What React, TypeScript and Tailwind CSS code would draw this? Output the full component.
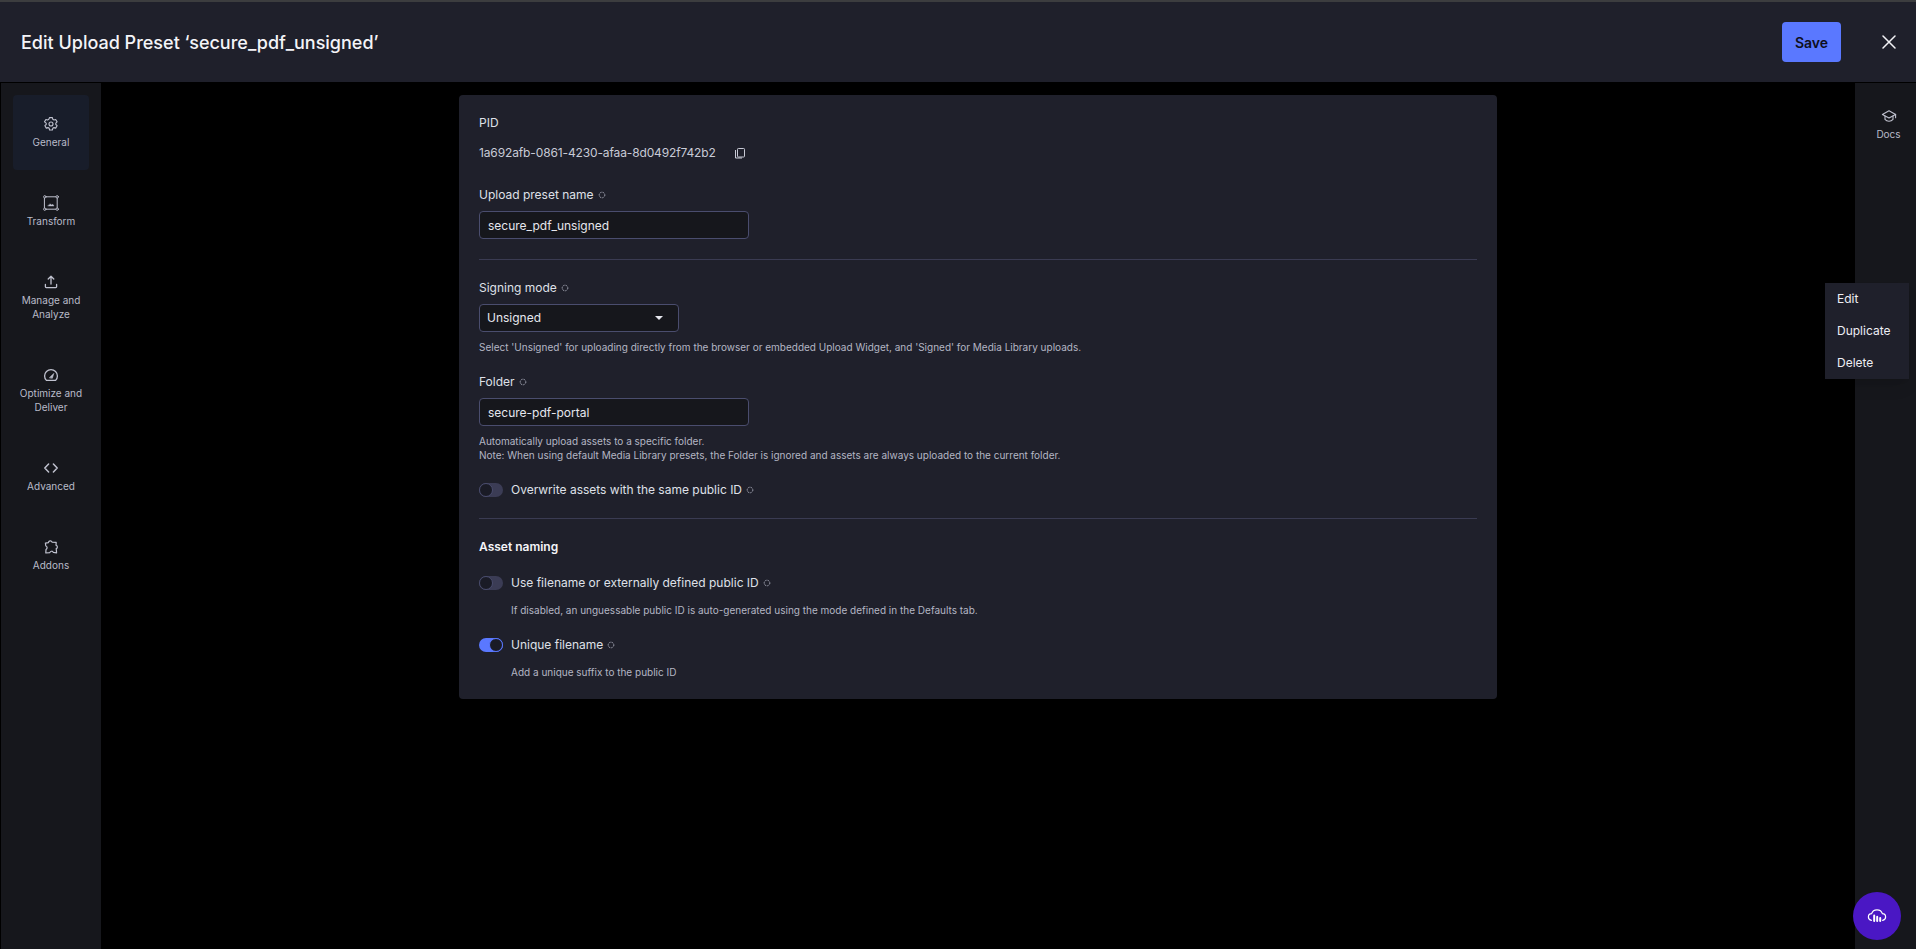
import { ReactNode } from "react";

const font = { fontFamily: "Inter, 'Noto Sans', sans-serif" };

function InfoDot() {
  return (
    <svg className="ml-[4px] inline-block h-[8px] w-[8px] shrink-0" viewBox="0 0 8 8" fill="none">
      <circle cx="4" cy="4" r="2.8" stroke="#b8bac8" strokeWidth="1" strokeDasharray="1 0.76" />
    </svg>
  );
}

const iconProps = {
  viewBox: "0 0 16 16",
  fill: "none",
  stroke: "#c0c2cf",
  strokeWidth: 1.1,
  strokeLinecap: "round" as const,
  strokeLinejoin: "round" as const,
  className: "h-4 w-4",
};

function GearIcon() {
  return (
    <svg {...iconProps}>
      <path d="M6.6 1.6h2.8l.4 1.7 1.2.7 1.7-.5 1.4 2.4-1.3 1.2v1.4l1.3 1.2-1.4 2.4-1.7-.5-1.2.7-.4 1.7H6.6l-.4-1.7-1.2-.7-1.7.5-1.4-2.4 1.3-1.2V7.1L1.5 5.9l1.4-2.4 1.7.5 1.2-.7z" />
      <circle cx="8" cy="8" r="2" />
    </svg>
  );
}

function TransformIcon() {
  return (
    <svg {...iconProps}>
      <rect x="1.8" y="1.8" width="12.4" height="12.4" strokeWidth="1" />
      <circle cx="1.8" cy="1.8" r="1.2" fill="#16171c" strokeWidth="0.9" />
      <circle cx="14.2" cy="1.8" r="1.2" fill="#16171c" strokeWidth="0.9" />
      <circle cx="1.8" cy="14.2" r="1.2" fill="#16171c" strokeWidth="0.9" />
      <circle cx="14.2" cy="14.2" r="1.2" fill="#16171c" strokeWidth="0.9" />
      <path d="M5 11h6L9.8 9.2 8.9 10.1 7.1 9z" fill="#c0c2cf" strokeWidth="0.4" />
    </svg>
  );
}

function UploadIcon() {
  return (
    <svg {...iconProps}>
      <path d="M8 10V2.4M5.2 5 8 2.2 10.8 5" strokeWidth="1.3" />
      <path d="M2.4 10.4v2.4c0 .5.3.8.8.8h9.6c.5 0 .8-.3.8-.8v-2.4" strokeWidth="1.3" />
    </svg>
  );
}

function GaugeIcon() {
  return (
    <svg {...iconProps}>
      <path d="M3.4 13.4h9.2c1.1-1.1 1.8-2.7 1.8-4.4A6.4 6.4 0 0 0 8 2.6 6.4 6.4 0 0 0 1.6 9c0 1.7.7 3.3 1.8 4.4z" strokeWidth="1.3" />
      <path d="M6.6 10.6 10.8 6.4 9.4 11z" fill="#c0c2cf" strokeWidth="0.6" />
    </svg>
  );
}

function CodeIcon() {
  return (
    <svg {...iconProps} strokeWidth={1.5}>
      <path d="M5.6 4 1.8 8l3.8 4M10.4 4l3.8 4-3.8 4" />
    </svg>
  );
}

function PuzzleIcon() {
  return (
    <svg {...iconProps} strokeWidth={1.2}>
      <path d="M2.4 4.2 5.4 3.6C5.6 1.8 8.2 1 9.2 3.2L13.2 3.4 13 6.2C14.8 6.8 14.8 9 13.2 9.6L13.6 13.8 10.4 13.4C9.6 11.8 7.6 11.8 6.8 13.6L2.8 14 3 10.4C4.6 9.4 4.4 7.4 2.8 7z" />
    </svg>
  );
}

function CapIcon() {
  return (
    <svg {...iconProps}>
      <path d="M1.4 6.4 8 2.8l6.6 3.6L8 10z" />
      <path d="M4 8v3.4c1 1.2 2.5 1.8 4 1.8s3-.6 4-1.8V8" />
      <path d="M14.6 6.4v3.4" />
    </svg>
  );
}

function NavItem({ icon, label, active }: { icon: ReactNode; label: ReactNode; active?: boolean }) {
  return (
    <div
      className={`flex flex-col items-center rounded-[4px] py-[21px] text-center text-[10px] leading-[14px] text-[#b9bbc9] ${
        active ? "bg-[#181d2a]" : ""
      }`}
    >
      <div className="mb-[3px]">{icon}</div>
      <div>{label}</div>
    </div>
  );
}

function Label({ children }: { children: ReactNode }) {
  return <div className="flex items-center text-[12px] leading-[18px] text-[#dfe0e8]">{children}</div>;
}

function Toggle({ on }: { on?: boolean }) {
  return (
    <div
      className={`flex h-[14px] w-[24px] items-center rounded-full ${
        on ? "justify-end bg-[#5a78ff]" : "justify-start bg-[#3b3c55]"
      }`}
    >
      <div className={`h-[14px] w-[14px] rounded-full border bg-[#1a1b26] ${on ? "border-[#5a78ff]" : "border-[#4a4d6e]"}`} />
    </div>
  );
}

function ToggleRow({ on, children }: { on?: boolean; children: ReactNode }) {
  return (
    <div className="flex h-[18px] items-center gap-[8px] text-[12px] text-[#dfe0e8]">
      <Toggle on={on} />
      <span>{children}</span>
      <span className="-ml-[8px] flex">
        <InfoDot />
      </span>
    </div>
  );
}

function Hint({ children, className = "" }: { children: ReactNode; className?: string }) {
  return <div className={`text-[10px] leading-[14px] text-[#b4b6c4] ${className}`}>{children}</div>;
}

function TextBox({ value }: { value: string }) {
  return (
    <div className="mt-[7px] flex h-[28px] w-[270px] items-center rounded-[4px] border border-[#4a4d6e] bg-[#16171c] px-[8px] pt-[2px] text-[12px] text-[#e6e7ee]">
      {value}
    </div>
  );
}

export default function App() {
  return (
    <div style={font} className="relative flex h-screen flex-col overflow-hidden bg-black">
      <div className="h-[2px] bg-[#3c3d3f]" />
      <header className="flex h-[80px] items-center justify-between bg-[#1f202b] pl-[21px] pr-[20px]">
        <h1 className="text-[18px] font-medium text-[#f4f4f8]">Edit Upload Preset ‘secure_pdf_unsigned’</h1>
        <div className="flex items-center gap-[41px]">
          <button className="h-[40px] w-[59px] rounded-[4px] bg-[#5a78ff] text-[14px] font-semibold text-[#0e0f1c]">
            Save
          </button>
          <svg className="h-[14px] w-[14px]" viewBox="0 0 14 14" fill="none" stroke="#f2f2f6" strokeWidth="1.5" strokeLinecap="round">
            <path d="M1 1l12 12M13 1 1 13" />
          </svg>
        </div>
      </header>
      <div className="mt-[1px] flex min-h-0 flex-1 pl-[1px]">
        <aside className="flex w-[100px] shrink-0 flex-col gap-[4px] bg-[#16171c] px-[12px] pt-[12px]">
          <NavItem active icon={<GearIcon />} label="General" />
          <NavItem icon={<TransformIcon />} label="Transform" />
          <NavItem icon={<UploadIcon />} label={<>Manage and<br />Analyze</>} />
          <NavItem icon={<GaugeIcon />} label={<>Optimize and<br />Deliver</>} />
          <NavItem icon={<CodeIcon />} label="Advanced" />
          <NavItem icon={<PuzzleIcon />} label="Addons" />
        </aside>
        <main className="flex min-w-0 flex-1 justify-center pt-[12px]">
          <section className="h-fit w-[1038px] rounded-[4px] bg-[#1f202b] px-[20px] pb-[20px] pt-[19px]">
            <Label>PID</Label>
            <div className="mt-[12px] flex h-[18px] items-center text-[12px] tracking-[-0.13px] text-[#c8cad6]">
              1a692afb-0861-4230-afaa-8d0492f742b2
              <svg className="ml-[18px] h-[12px] w-[12px]" viewBox="0 0 12 12" fill="none" stroke="#c8cad6" strokeWidth="1">
                <rect x="3.5" y="1.5" width="7" height="8.5" rx="0.8" />
                <path d="M1.5 3v8h6.5" />
              </svg>
            </div>
            <div className="mt-[24px]">
              <Label>Upload preset name<InfoDot /></Label>
            </div>
            <TextBox value="secure_pdf_unsigned" />
            <div className="mt-[20px] h-[1px] bg-[#3a3b52]" />
            <div className="mt-[19px]">
              <Label>Signing mode<InfoDot /></Label>
            </div>
            <div className="mt-[7px] flex h-[28px] w-[200px] items-center justify-between rounded-[4px] border border-[#4a4d6e] bg-[#16171c] pl-[7px] pr-[15px] text-[12px] text-[#e6e7ee]">
              Unsigned
              <svg className="h-[4px] w-[8px]" viewBox="0 0 8 4" fill="#e6e7ee">
                <path d="M0 0h8L4 4z" />
              </svg>
            </div>
            <Hint className="mt-[8px]">
              Select 'Unsigned' for uploading directly from the browser or embedded Upload Widget, and 'Signed' for Media Library uploads.
            </Hint>
            <div className="mt-[19px]">
              <Label>Folder<InfoDot /></Label>
            </div>
            <TextBox value="secure-pdf-portal" />
            <Hint className="mt-[8px]">
              Automatically upload assets to a specific folder.
              <br />
              Note: When using default Media Library presets, the Folder is ignored and assets are always uploaded to the current folder.
            </Hint>
            <div className="mt-[19px]">
              <ToggleRow>Overwrite assets with the same public ID</ToggleRow>
            </div>
            <div className="mt-[19px] h-[1px] bg-[#3a3b52]" />
            <div className="mt-[19px] text-[12px] font-semibold leading-[18px] text-[#f4f4f8]">Asset naming</div>
            <div className="mt-[18px]">
              <ToggleRow>Use filename or externally defined public ID</ToggleRow>
            </div>
            <Hint className="ml-[32px] mt-[11px]">
              If disabled, an unguessable public ID is auto-generated using the mode defined in the Defaults tab.
            </Hint>
            <div className="mt-[19px]">
              <ToggleRow on>Unique filename</ToggleRow>
            </div>
            <Hint className="ml-[32px] mt-[11px]">Add a unique suffix to the public ID</Hint>
          </section>
        </main>
        <aside className="w-[61px] shrink-0 bg-[#16171c] pl-[6px] pt-[4px]">
          <NavItem icon={<CapIcon />} label="Docs" />
        </aside>
      </div>
      <div className="absolute left-[1825px] top-[283px] w-[84px] bg-[#1f202b] text-[12px] text-[#eeeef4] shadow-lg">
        <div className="flex h-[32px] items-center pl-[12px]">Edit</div>
        <div className="flex h-[32px] items-center pl-[12px]">Duplicate</div>
        <div className="flex h-[32px] items-center pl-[12px]">Delete</div>
      </div>
      <div className="absolute left-[1853px] top-[892px] flex h-[48px] w-[48px] items-center justify-center rounded-full bg-[#4a17c4]">
        <svg className="h-[20px] w-[20px]" viewBox="0 0 20 20" fill="none" stroke="#ffffff" strokeWidth="1.2" strokeLinecap="round">
          <path d="M4.4 14.4C2.6 14 1.4 12.6 1.4 11c0-1.8 1.4-3.2 3.2-3.3C5.3 5.4 7.4 3.8 10 3.8s4.7 1.6 5.4 3.9c1.8.1 3.2 1.5 3.2 3.3 0 1.6-1.2 3-3 3.4" />
          <path d="M7.2 9.6v5.4M10.2 10.8v4.2M13.2 12v3" strokeWidth="2" />
        </svg>
      </div>
    </div>
  );
}
